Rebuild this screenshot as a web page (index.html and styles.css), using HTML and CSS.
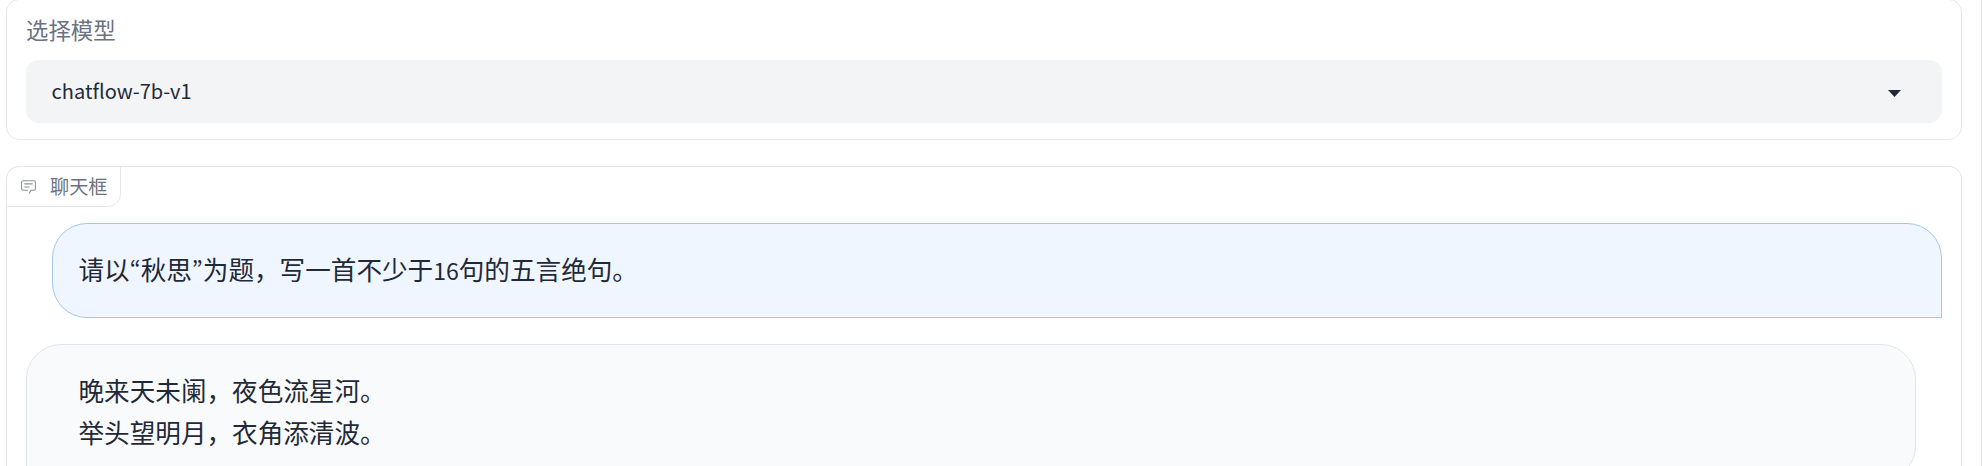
FILE: index.html
```html
<!DOCTYPE html>
<html lang="zh-CN">
<head>
<meta charset="utf-8">
<title>聊天框</title>
<link rel="stylesheet" href="styles.css">
</head>
<body>
<main class="app">
  <section class="panel model-panel">
    <div class="field-label">选择模型</div>
    <div class="select">
      <span class="select-value">chatflow-7b-v1</span>
      <svg class="caret" viewBox="0 0 13 7"><path d="M0 0H13L6.5 7Z"/></svg>
    </div>
  </section>
  <section class="panel chat-panel">
    <div class="chat-label">
      <svg class="chat-icon" viewBox="0 0 32 32">
        <path d="M17.74 30 16 29l4-7h6a2 2 0 0 0 2-2V8a2 2 0 0 0-2-2H6a2 2 0 0 0-2 2v12a2 2 0 0 0 2 2h9v2H6a4 4 0 0 1-4-4V8a4 4 0 0 1 4-4h20a4 4 0 0 1 4 4v12a4 4 0 0 1-4 4h-4.84Z"/>
        <path d="M8 10h16v2H8zM8 16h10v2H8z"/>
      </svg>
      <span>聊天框</span>
    </div>
    <div class="messages">
      <div class="message user">请以<span class="latin">“</span>秋思<span class="latin">”</span>为题，写一首不少于<span class="latin">16</span>句的五言绝句。</div>
      <div class="message bot">晚来天未阑，夜色流星河。<br>举头望明月，衣角添清波。</div>
    </div>
  </section>
</main>
</body>
</html>
```
FILE: styles.css
```css
* { box-sizing: border-box; }

body {
  margin: 0;
  height: 466px;
  overflow: hidden;
  background: #fff;
  color: #1f2937;
  font-family: "Noto Sans CJK SC", sans-serif;
}

.app {
  display: flex;
  flex-direction: column;
  gap: 26px;
  height: 467px;
  margin-top: -1px;
  padding: 0 19px 0 6px;
  border-right: 1px solid #e5e7eb;
}

.panel {
  border: 1px solid #e5e7eb;
  border-radius: 13px;
}

.model-panel {
  flex: none;
  height: 141px;
  padding: 12px 19px 0;
}

.field-label {
  height: 34px;
  margin-bottom: 14px;
  color: #6b7280;
  font-size: 22.4px;
  line-height: 34px;
}

.select {
  display: flex;
  align-items: center;
  justify-content: space-between;
  height: 63px;
  padding: 0 41px 0 25.6px;
  border-radius: 13px;
  background: #f3f4f6;
}

.select-value {
  padding-bottom: 2px;
  font-size: 20px;
  line-height: 34px;
}

.caret {
  width: 13px;
  height: 7px;
  margin-top: 3px;
  fill: #1f2937;
}

.chat-panel {
  flex: 1;
  min-height: 0;
  overflow: hidden;
  border-bottom: 0;
  border-radius: 13px 13px 0 0;
}

.chat-label {
  display: flex;
  align-items: center;
  gap: 13px;
  width: 115px;
  height: 41px;
  margin: -1px 0 0 -1px;
  padding-left: 13px;
  border: 1px solid #e5e7eb;
  border-radius: 13px 0 13px 0;
  color: #6b7280;
  font-size: 19.2px;
  line-height: 28px;
  white-space: nowrap;
}

.chat-label span {
  padding-bottom: 2px;
}

.chat-icon {
  flex: none;
  width: 17px;
  height: 17px;
  fill: #8b909b;
}

.messages {
  display: flex;
  flex-direction: column;
  gap: 26px;
  padding: 16px 19px 0;
}

.message {
  padding: 24px 25.5px 27px;
  border: 1px solid;
  border-radius: 35px;
  font-size: 25.6px;
  line-height: 42px;
}

/* Narrow figures and proportional quotes inside Chinese text */
.latin {
  font-size: 0.9em;
  line-height: 1;
  font-feature-settings: "pwid";
}

.user {
  margin-left: 26px;
  border-color: #a5c6e8;
  border-bottom-right-radius: 0;
  background: #eff6ff;
}

.bot {
  margin-right: 26px;
  padding-left: 51.5px;
  border-color: #e2e5ea;
  border-bottom-left-radius: 0;
  background: #f9fafb;
}
```
